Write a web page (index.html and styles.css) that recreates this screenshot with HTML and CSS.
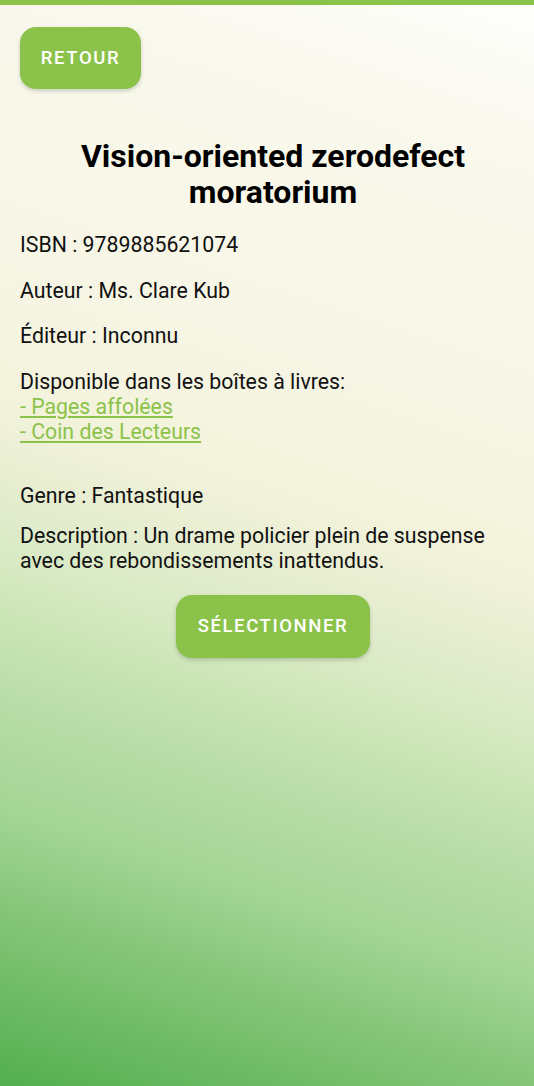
FILE: index.html
```html
<!DOCTYPE html>
<html lang="fr">
<head>
<meta charset="utf-8">
<link rel="stylesheet" href="styles.css">
</head>
<body>
<div class="topbar"></div>
<main class="page">
  <div class="actions">
    <button class="btn btn-back">Retour</button>
  </div>
  <h1 class="title">Vision-oriented zerodefect moratorium</h1>
  <p class="field">ISBN : 9789885621074</p>
  <p class="field">Auteur : Ms. Clare Kub</p>
  <p class="field">Éditeur : Inconnu</p>
  <div class="field boxes">
    <div>Disponible dans les boîtes à livres:</div>
    <a class="box-link" href="#">- Pages affolées</a>
    <a class="box-link" href="#">- Coin des Lecteurs</a>
  </div>
  <p class="field genre">Genre : Fantastique</p>
  <p class="field desc">Description : Un drame policier plein de suspense avec des rebondissements inattendus.</p>
  <div class="select-row">
    <button class="btn btn-select">Sélectionner</button>
  </div>
</main>
</body>
</html>
```

FILE: styles.css
```css
html, body {
  margin: 0;
  padding: 0;
  height: 100%;
}
body {
  font-family: Roboto, "Noto Sans", sans-serif;
  color: #111;
  background: linear-gradient(18deg, #52af50 0%, #6cba63 7%, #88c77c 15%, #a3d595 22%, #b7dca6 30%, #cde6b8 38%, #dfeccb 45%, #e9eed2 49%, #f3f3dc 55%, #f6f5e3 62%, #f8f7e8 72%, #f8f8ec 86%, #fefefc 100%);
  min-height: 1086px;
}
.topbar {
  height: 5px;
  background: #8bc34a;
}
.page {
  padding: 22px 8px 0 20px;
}
.actions {
  display: flex;
}
.btn {
  background: #8bc34a;
  color: #fff;
  border: none;
  border-radius: 16px;
  font-family: Roboto, sans-serif;
  font-weight: 500;
  font-size: 18.5px;
  letter-spacing: 1.6px;
  text-transform: uppercase;
  box-shadow: 0 2px 4px rgba(0,0,0,0.18);
  cursor: pointer;
}
.btn-back {
  width: 121px;
  height: 62px;
}
.title {
  font-size: 32px;
  font-weight: 700;
  text-align: center;
  line-height: 36px;
  margin: 49px 0 22px 0;
  color: #000;
}
.field {
  font-size: 21.3px;
  line-height: 25px;
  margin: 0 0 20.5px 0;
}
.boxes {
  display: flex;
  flex-direction: column;
  align-items: flex-start;
  margin-bottom: 39px;
}
.box-link {
  color: #8bc34a;
  text-decoration: underline;
}
.genre {
  margin-bottom: 15px;
}
.desc {
  margin-bottom: 22px;
}
.select-row {
  display: flex;
  justify-content: center;
}
.btn-select {
  width: 194px;
  height: 63px;
}
```
